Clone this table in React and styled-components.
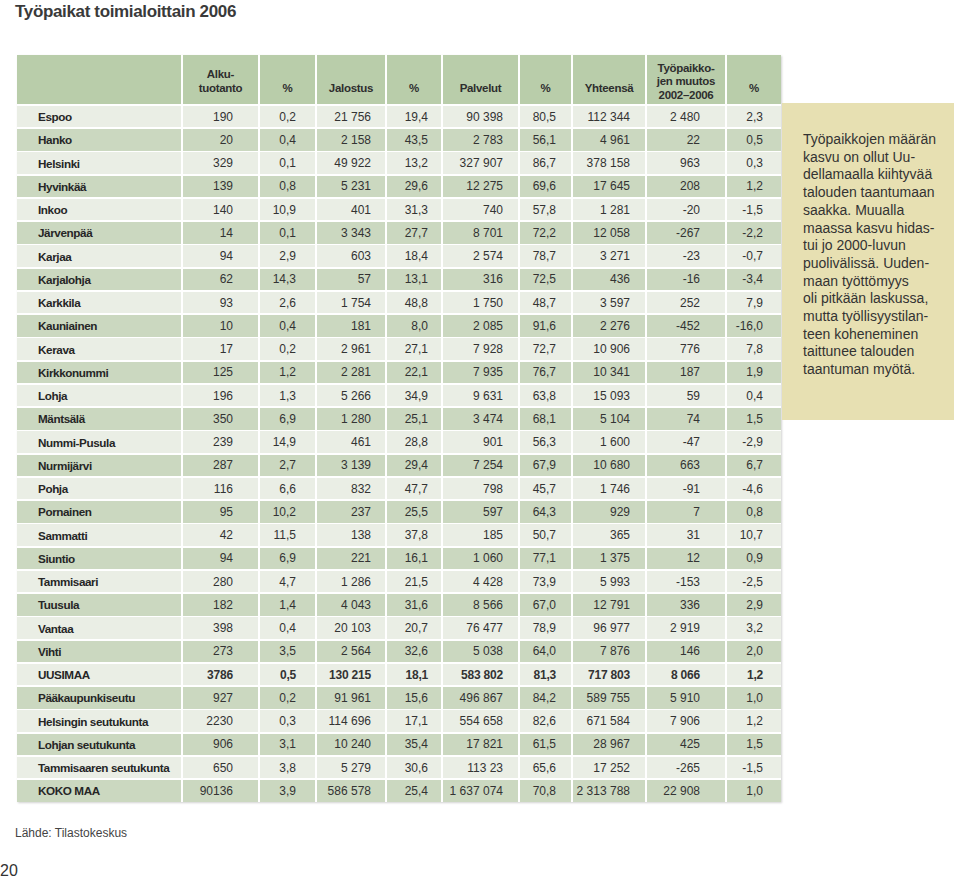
import React from "react";
import styled, { createGlobalStyle } from "styled-components";

const Global = createGlobalStyle`
  html, body { margin: 0; padding: 0; background: #ffffff; }
  body { font-family: "Liberation Sans", Arial, sans-serif; color: #333; }
`;

const Page = styled.div`
  width: 960px;
  height: 877px;
  overflow: hidden;
  position: relative;
`;

const Title = styled.h1`
  margin: 2px 0 0 15px;
  font-size: 17px;
  line-height: 20px;
  font-weight: bold;
  letter-spacing: -0.35px;
  color: #3a3a3a;
`;

const Main = styled.div`
  display: flex;
  align-items: flex-start;
  margin: 33px 0 0 17px;
`;

const Grid = styled.div`
  display: grid;
  grid-template-columns: 164px 75px 55px 68px 54px 75px 51px 72px 78px 54px;
  grid-template-rows: 49px;
  grid-auto-rows: 21.5px;
  column-gap: 2px;
  row-gap: 1.75px;
  background: #ffffff;
  box-shadow: 1px 1px 2px rgba(0, 0, 0, 0.18);
`;

const HeadCell = styled.div`
  background: #b9cdaa;
  display: flex;
  align-items: flex-end;
  justify-content: center;
  text-align: center;
  padding-bottom: ${(p) => p.$pb ?? 9}px;
  font-weight: bold;
  font-size: 11.5px;
  letter-spacing: -0.3px;
  line-height: ${(p) => p.$lh ?? 14}px;
  color: #2e2e2e;
  box-sizing: border-box;
  white-space: pre-line;
`;

const NameCell = styled.div`
  background: ${(p) => (p.$dark ? "#cbd8c0" : "#eaeee5")};
  display: flex;
  align-items: center;
  padding-left: 21px;
  font-weight: bold;
  font-size: 11.7px;
  letter-spacing: -0.4px;
  color: #262626;
  white-space: nowrap;
`;

const NumCell = styled.div`
  background: ${(p) => (p.$dark ? "#cbd8c0" : "#eaeee5")};
  display: flex;
  align-items: center;
  justify-content: flex-end;
  padding-right: ${(p) => p.$pr}px;
  font-size: 12px;
  font-weight: ${(p) => (p.$bold ? "bold" : "normal")};
  letter-spacing: ${(p) => (p.$bold ? "-0.2px" : "0")};
  color: #333;
  white-space: nowrap;
`;

const SideBox = styled.div`
  margin: 48px 0 0 1px;
  width: 172px;
  height: 317px;
  box-sizing: border-box;
  background: #e7e0b2;
  padding: 28px 0 0 21px;
  font-size: 14px;
  line-height: 17.7px;
  color: #333;
  white-space: pre-line;
`;

const Source = styled.div`
  margin: 24px 0 0 15px;
  font-size: 12px;
  line-height: 14px;
  color: #444;
`;

const PageNo = styled.div`
  margin: 22px 0 0 0;
  font-size: 16px;
  line-height: 18px;
  color: #333;
`;

const headers = [
  { t: "" },
  { t: "Alku-\ntuotanto" },
  { t: "%" },
  { t: "Jalostus" },
  { t: "%" },
  { t: "Palvelut" },
  { t: "%" },
  { t: "Yhteensä" },
  { t: "Työpaikko-\njen muutos\n2002–2006", pb: 2, lh: 13.5 },
  { t: "%" },
];

const pads = [25, 19, 14, 13, 15, 15, 15, 25, 18];

const rows = [
  ["Espoo", "190", "0,2", "21 756", "19,4", "90 398", "80,5", "112 344", "2 480", "2,3"],
  ["Hanko", "20", "0,4", "2 158", "43,5", "2 783", "56,1", "4 961", "22", "0,5"],
  ["Helsinki", "329", "0,1", "49 922", "13,2", "327 907", "86,7", "378 158", "963", "0,3"],
  ["Hyvinkää", "139", "0,8", "5 231", "29,6", "12 275", "69,6", "17 645", "208", "1,2"],
  ["Inkoo", "140", "10,9", "401", "31,3", "740", "57,8", "1 281", "-20", "-1,5"],
  ["Järvenpää", "14", "0,1", "3 343", "27,7", "8 701", "72,2", "12 058", "-267", "-2,2"],
  ["Karjaa", "94", "2,9", "603", "18,4", "2 574", "78,7", "3 271", "-23", "-0,7"],
  ["Karjalohja", "62", "14,3", "57", "13,1", "316", "72,5", "436", "-16", "-3,4"],
  ["Karkkila", "93", "2,6", "1 754", "48,8", "1 750", "48,7", "3 597", "252", "7,9"],
  ["Kauniainen", "10", "0,4", "181", "8,0", "2 085", "91,6", "2 276", "-452", "-16,0"],
  ["Kerava", "17", "0,2", "2 961", "27,1", "7 928", "72,7", "10 906", "776", "7,8"],
  ["Kirkkonummi", "125", "1,2", "2 281", "22,1", "7 935", "76,7", "10 341", "187", "1,9"],
  ["Lohja", "196", "1,3", "5 266", "34,9", "9 631", "63,8", "15 093", "59", "0,4"],
  ["Mäntsälä", "350", "6,9", "1 280", "25,1", "3 474", "68,1", "5 104", "74", "1,5"],
  ["Nummi-Pusula", "239", "14,9", "461", "28,8", "901", "56,3", "1 600", "-47", "-2,9"],
  ["Nurmijärvi", "287", "2,7", "3 139", "29,4", "7 254", "67,9", "10 680", "663", "6,7"],
  ["Pohja", "116", "6,6", "832", "47,7", "798", "45,7", "1 746", "-91", "-4,6"],
  ["Pornainen", "95", "10,2", "237", "25,5", "597", "64,3", "929", "7", "0,8"],
  ["Sammatti", "42", "11,5", "138", "37,8", "185", "50,7", "365", "31", "10,7"],
  ["Siuntio", "94", "6,9", "221", "16,1", "1 060", "77,1", "1 375", "12", "0,9"],
  ["Tammisaari", "280", "4,7", "1 286", "21,5", "4 428", "73,9", "5 993", "-153", "-2,5"],
  ["Tuusula", "182", "1,4", "4 043", "31,6", "8 566", "67,0", "12 791", "336", "2,9"],
  ["Vantaa", "398", "0,4", "20 103", "20,7", "76 477", "78,9", "96 977", "2 919", "3,2"],
  ["Vihti", "273", "3,5", "2 564", "32,6", "5 038", "64,0", "7 876", "146", "2,0"],
  ["UUSIMAA", "3786", "0,5", "130 215", "18,1", "583 802", "81,3", "717 803", "8 066", "1,2"],
  ["Pääkaupunkiseutu", "927", "0,2", "91 961", "15,6", "496 867", "84,2", "589 755", "5 910", "1,0"],
  ["Helsingin seutukunta", "2230", "0,3", "114 696", "17,1", "554 658", "82,6", "671 584", "7 906", "1,2"],
  ["Lohjan seutukunta", "906", "3,1", "10 240", "35,4", "17 821", "61,5", "28 967", "425", "1,5"],
  ["Tammisaaren seutukunta", "650", "3,8", "5 279", "30,6", "113 23", "65,6", "17 252", "-265", "-1,5"],
  ["KOKO MAA", "90136", "3,9", "586 578", "25,4", "1 637 074", "70,8", "2 313 788", "22 908", "1,0"],
];

const sideText = `Työpaikkojen määrän
kasvu on ollut Uu-
dellamaalla kiihtyvää
talouden taantumaan
saakka. Muualla
maassa kasvu hidas-
tui jo 2000-luvun
puolivälissä. Uuden-
maan työttömyys
oli pitkään laskussa,
mutta työllisyystilan-
teen koheneminen
taittunee talouden
taantuman myötä.`;

export default function App() {
  return (
    <Page>
      <Global />
      <Title>Työpaikat toimialoittain 2006</Title>
      <Main>
        <Grid>
          {headers.map((h, i) => (
            <HeadCell key={"h" + i} $pb={h.pb} $lh={h.lh}>
              {h.t}
            </HeadCell>
          ))}
          {rows.map((r, ri) => {
            const dark = ri % 2 === 1;
            const bold = r[0] === "UUSIMAA";
            return (
              <React.Fragment key={r[0]}>
                <NameCell $dark={dark}>{r[0]}</NameCell>
                {r.slice(1).map((v, ci) => (
                  <NumCell key={ci} $dark={dark} $pr={pads[ci]} $bold={bold}>
                    {v}
                  </NumCell>
                ))}
              </React.Fragment>
            );
          })}
        </Grid>
        <SideBox>{sideText}</SideBox>
      </Main>
      <Source>Lähde: Tilastokeskus</Source>
      <PageNo>20</PageNo>
    </Page>
  );
}
